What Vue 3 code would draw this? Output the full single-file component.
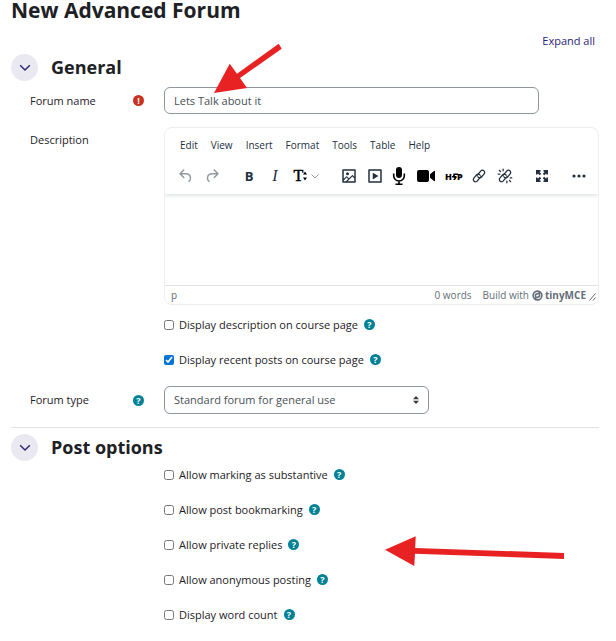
<script setup>
import { ref } from 'vue'

const forumName = ref('Lets Talk about it')
const forumType = ref('general')

const menus = ['Edit', 'View', 'Insert', 'Format', 'Tools', 'Table', 'Help']

const displayOptions = ref([
  { id: 'showdescription', label: 'Display description on course page', checked: false },
  { id: 'showrecent', label: 'Display recent posts on course page', checked: true },
])

const postOptions = ref([
  { id: 'substantive', label: 'Allow marking as substantive', checked: false },
  { id: 'bookmark', label: 'Allow post bookmarking', checked: false },
  { id: 'private', label: 'Allow private replies', checked: false },
  { id: 'anonymous', label: 'Allow anonymous posting', checked: false },
  { id: 'wordcount', label: 'Display word count', checked: false },
])
</script>

<template>
  <main class="page">
    <h1>New Advanced Forum</h1>
    <div class="expand"><a href="#">Expand all</a></div>

    <section class="general">
      <header class="section-head">
        <button class="toggle" type="button" aria-label="Collapse General">
          <svg width="12" height="8" viewBox="0 0 12 8"><path d="M1.2 1.2 6 6l4.8-4.8" /></svg>
        </button>
        <h2>General</h2>
      </header>

      <div class="row name-row">
        <div class="label">
          <label for="name">Forum name</label>
          <span class="required" title="Required">!</span>
        </div>
        <input id="name" v-model="forumName" class="text" type="text" />
      </div>

      <div class="row">
        <div class="label top"><label for="description">Description</label></div>
        <div class="editor">
          <div class="editor-head">
            <nav class="menubar">
              <button v-for="menu in menus" :key="menu" type="button">{{ menu }}</button>
            </nav>
            <div class="toolbar">
              <div class="group muted">
                <button type="button" aria-label="Undo">
                  <svg width="18" height="18" viewBox="0 0 24 24"><path d="M6.4 8H12c3.7 0 6.2 2 6.8 5.1.6 2.7-.4 5.6-2.3 6.8a1 1 0 0 1-1-1.8c1.1-.6 1.8-2.7 1.4-4.6-.5-2.1-2.1-3.5-4.9-3.5H6.4l3.3 3.3a1 1 0 1 1-1.4 1.4l-5-5a1 1 0 0 1 0-1.4l5-5a1 1 0 0 1 1.4 1.4L6.4 8Z" /></svg>
                </button>
                <button type="button" aria-label="Redo">
                  <svg width="18" height="18" viewBox="0 0 24 24"><path d="M17.6 10H12c-2.8 0-4.4 1.4-4.9 3.5-.4 2 .3 4 1.4 4.6a1 1 0 1 1-1 1.8c-2-1.2-2.9-4.1-2.3-6.8.6-3 3-5.1 6.8-5.1h5.6l-3.3-3.3a1 1 0 1 1 1.4-1.4l5 5a1 1 0 0 1 0 1.4l-5 5a1 1 0 0 1-1.4-1.4l3.3-3.3Z" /></svg>
                </button>
              </div>
              <div class="group">
                <button type="button" aria-label="Bold"><b>B</b></button>
                <button type="button" aria-label="Italic"><i>I</i></button>
                <button class="styles" type="button" aria-label="Text styles">
                  <span class="tee">T</span>
                  <svg width="4" height="10" viewBox="0 0 4 10"><path class="ink" d="M0 3.5 2 .5l2 3zM0 6.5l2 3 2-3z" /></svg>
                  <svg class="caret" width="8" height="5" viewBox="0 0 8 5"><path d="m.5.5 3.500 3.500L7.500.5" /></svg>
                </button>
              </div>
              <div class="group">
                <button type="button" aria-label="Image">
                  <svg width="18" height="18" viewBox="0 0 24 24"><path d="m5 15.7 3.300-3.200c.3-.3.7-.3 1 0L12 15l4.100-4c.3-.4.8-.4 1 0l2 1.900V5H5v10.700ZM5 18V19h3l2.800-2.900-2-2L5 17.900Zm14-3-2.500-2.400-6.400 6.500H19v-4ZM4 3h16c.6 0 1 .4 1 1v16c0 .6-.4 1-1 1H4a1 1 0 0 1-1-1V4c0-.6.4-1 1-1Zm6 8a2 2 0 1 0 0-4 2 2 0 0 0 0 4Z" fill-rule="evenodd" /></svg>
                </button>
                <button type="button" aria-label="Multimedia">
                  <svg width="18" height="18" viewBox="0 0 24 24"><path d="M4 3h16c.6 0 1 .4 1 1v16c0 .6-.4 1-1 1H4a1 1 0 0 1-1-1V4c0-.6.4-1 1-1Zm1 2v14h14V5H5Zm4 2.500 7.500 4.500L9 16.500Z" fill-rule="evenodd" /></svg>
                </button>
                <button class="audio" type="button" aria-label="Record audio">
                  <svg width="14" height="18" viewBox="0 0 14 18">
                    <rect class="ink" x="4" y="0" width="6" height="11" rx="3" />
                    <path class="ink-line" d="M1.700 6.500V9a5.300 5 0 0 0 10.600 0V6.500M7 14v3M3.500 17.200h7" />
                  </svg>
                </button>
                <button class="video" type="button" aria-label="Record video">
                  <svg width="18" height="12" viewBox="0 0 18 12">
                    <rect class="ink" width="12" height="12" rx="2" />
                    <path class="ink" d="M13 4.200 17 1q1-.5 1 .5v9q0 1-1 .5l-4-3.200z" />
                  </svg>
                </button>
                <button class="h5p" type="button" aria-label="Insert interactive content">
                  <svg width="20" height="14" viewBox="0 0 20 14">
                    <text class="letters" x="1" y="11">H</text>
                    <text class="letters" x="13" y="11">P</text>
                    <path class="ink" d="M9.500 4.500H14V6h-3l-.3 1h1.300l1 1-2 3H9l1.500-2L8 8.200V7h1z" />
                  </svg>
                </button>
                <button type="button" aria-label="Link">
                  <svg class="line" width="18" height="18" viewBox="0 0 24 24">
                    <g transform="rotate(-50 12 12)">
                      <path d="M13.500 14.500H5.500a3 3 0 0 1 0-6H11a3 3 0 0 1 2.800 4" />
                      <path d="M10.500 9.500h8a3 3 0 0 1 0 6H13a3 3 0 0 1-2.800-4" />
                    </g>
                  </svg>
                </button>
                <button type="button" aria-label="Unlink">
                  <svg class="line" width="18" height="18" viewBox="0 0 24 24">
                    <g transform="rotate(-50 12 12)">
                      <path d="M13.500 14.500H5.500a3 3 0 0 1 0-6H11a3 3 0 0 1 2.800 4" />
                      <path d="M10.500 9.500h8a3 3 0 0 1 0 6H13a3 3 0 0 1-2.800-4" />
                    </g>
                    <path d="m4.500 4.500 1.500 1.500M9.500 3v2M3 9.500h2M18 18l1.500 1.500M14.500 19v2M19 14.500h2" />
                  </svg>
                </button>
              </div>
              <div class="group">
                <button type="button" aria-label="Fullscreen">
                  <svg width="18" height="18" viewBox="0 0 24 24"><path d="M4 4h6v2L8.500 6.500 11 9 9 11 6.500 8.500 6 10H4zM20 4v6h-2l-.5-1.500L15 11l-2-2 2.500-2.500L14 6V4zM4 20v-6h2l.5 1.500L9 13l2 2-2.500 2.500L10 18v2zM20 20h-6v-2l1.500-.5L13 15l2-2 2.500 2.500L18 14h2z" /></svg>
                </button>
              </div>
              <div class="group">
                <button type="button" aria-label="More">
                  <svg width="14" height="4" viewBox="0 0 14 4"><circle cx="2" cy="2" r="1.600" /><circle cx="7" cy="2" r="1.600" /><circle cx="12" cy="2" r="1.600" /></svg>
                </button>
              </div>
            </div>
          </div>
          <textarea id="description" class="body"></textarea>
          <footer class="status">
            <span class="path">p</span>
            <span>0 words</span>
            <a href="#" class="brand">
              Build with
              <svg width="11" height="11" viewBox="0 0 11 11">
                <circle cx="5.500" cy="5.500" r="4.400" />
                <path d="M3.500 4.500 7.500 3v3.500L3.500 8z" />
              </svg>
              <strong>tinyMCE</strong>
            </a>
            <svg class="grip" width="7" height="8" viewBox="0 0 7 8"><path d="m.5 7.500 6-7M4 7.500l2.500-3" /></svg>
          </footer>
        </div>
      </div>

      <div class="checks display-checks">
        <div v-for="option in displayOptions" :key="option.id" class="check">
          <input :id="option.id" v-model="option.checked" type="checkbox" />
          <label :for="option.id">{{ option.label }}</label>
          <button class="help" type="button" aria-label="Help">?</button>
        </div>
      </div>

      <div class="row">
        <div class="label">
          <label for="type">Forum type</label>
          <button class="help" type="button" aria-label="Help">?</button>
        </div>
        <div class="select">
          <select id="type" v-model="forumType">
            <option value="general">Standard forum for general use</option>
          </select>
          <svg width="6" height="8" viewBox="0 0 6 8"><path d="M0 3.300 3 0l3 3.300zM0 4.700 3 8l3-3.300z" /></svg>
        </div>
      </div>
    </section>

    <section class="post">
      <header class="section-head">
        <button class="toggle" type="button" aria-label="Collapse Post options">
          <svg width="12" height="8" viewBox="0 0 12 8"><path d="M1.2 1.2 6 6l4.800-4.800" /></svg>
        </button>
        <h2>Post options</h2>
      </header>
      <div class="checks">
        <div v-for="option in postOptions" :key="option.id" class="check">
          <input :id="option.id" v-model="option.checked" type="checkbox" />
          <label :for="option.id">{{ option.label }}</label>
          <button class="help" type="button" aria-label="Help">?</button>
        </div>
      </div>
    </section>

    <svg class="arrow arrow-name" width="68" height="51" viewBox="214 43 68 51">
      <path d="M214 93 229.700 63.700l7.300 10 41.700-30 3 5L240 78l7 10z" />
    </svg>
    <svg class="arrow arrow-options" width="180" height="31" viewBox="385 536 180 31">
      <path d="m385 549.700 30.700-13.400-.5 11.700 148.800 5v6l-149-5.300-.7 12.300z" />
    </svg>
  </main>
</template>

<style>
body {
  margin: 0;
  background: #fff;
}
</style>

<style scoped>
.page {
  position: relative;
  padding: 0 17px 16px 11px;
  font-family: "Open Sans", "Noto Sans", sans-serif;
  font-size: 11px;
  line-height: 16px;
  color: #1d2125;
}
button,
input,
select,
textarea {
  font: inherit;
  color: inherit;
  margin: 0;
  box-sizing: border-box;
}
button {
  padding: 0;
  border: 0;
  background: none;
}
a {
  color: #2c2378;
  text-decoration: none;
}
h1 {
  margin: 0;
  font-size: 21px;
  line-height: 21px;
}
h2 {
  margin: 0;
  font-size: 18px;
  line-height: 27px;
}
.expand {
  margin-top: 12px;
  padding-right: 4px;
  text-align: right;
}
.general {
  margin-top: 5px;
  padding-bottom: 13px;
  border-bottom: 1px solid #dee2e6;
}
.post {
  padding-top: 6px;
}
.section-head {
  display: flex;
  align-items: center;
  gap: 13px;
}
.toggle {
  display: flex;
  align-items: center;
  justify-content: center;
  width: 27px;
  height: 27px;
  border-radius: 50%;
  background: #eae9f2;
}
.toggle path {
  fill: none;
  stroke: #2c2378;
  stroke-width: 1.4;
}
.row {
  display: grid;
  grid-template-columns: 153px minmax(0, 1fr);
}
.name-row {
  margin: 6px 0 13px;
}
.label {
  display: flex;
  align-items: center;
  justify-content: space-between;
  padding: 0 20px 0 19px;
}
.label.top {
  align-items: flex-start;
  padding-top: 5px;
}
.required,
.help {
  display: flex;
  align-items: center;
  justify-content: center;
  width: 11px;
  height: 11px;
  border-radius: 50%;
  background: #ca3120;
  color: #fff;
  font-size: 9px;
  font-weight: 700;
  line-height: 11px;
}
.help {
  background: #008196;
}
.text,
select {
  width: 100%;
  height: 27px;
  padding: 0 9px;
  border: 1px solid #8f959e;
  border-radius: 6px;
  background: #fff;
  color: #495057;
}
.text {
  max-width: 375px;
}
.select {
  display: grid;
  align-items: center;
  max-width: 265px;
}
.select > * {
  grid-area: 1 / 1;
}
.select svg {
  justify-self: end;
  margin-right: 10px;
  fill: #343a40;
  pointer-events: none;
}
select {
  height: 28px;
  appearance: none;
}
.editor {
  display: flex;
  flex-direction: column;
  border: 1px solid #eee;
  border-radius: 8px;
  overflow: hidden;
  color: #222f3e;
}
.editor-head {
  z-index: 1;
  box-shadow: 0 2px 3px rgba(34, 47, 62, 0.12);
}
.menubar {
  display: flex;
  gap: 13px;
  height: 34px;
  padding: 0 15px;
  font-size: 10px;
}
.toolbar {
  display: flex;
  gap: 11px;
  height: 32px;
  padding: 0 6px 0 8px;
}
.group {
  display: flex;
}
.group button {
  display: flex;
  align-items: center;
  justify-content: center;
  width: 26px;
  height: 28px;
}
.group .audio {
  width: 22px;
}
.group .video {
  width: 32px;
}
.group .h5p {
  width: 24px;
}
.group svg {
  fill: #222f3e;
}
.muted svg {
  fill: #9299a1;
}
.group b {
  font-size: 13px;
}
.group i {
  font-family: "Liberation Serif", serif;
  font-size: 16px;
}
.group .styles {
  width: 37px;
}
.tee {
  font-family: "Liberation Serif", serif;
  font-size: 16px;
  color: #000;
  -webkit-text-stroke: 0.5px #000;
}
.group .caret {
  margin-left: 4px;
  fill: none;
  stroke: #9299a1;
}
.group .ink {
  fill: #000;
}
.group .ink-line {
  fill: none;
  stroke: #000;
  stroke-width: 1.6;
}
.letters {
  font-size: 9px;
  font-weight: 800;
  fill: #000;
}
.group .line {
  fill: none;
  stroke: #222f3e;
  stroke-width: 1.7;
  stroke-linecap: round;
}
.body {
  display: block;
  width: 100%;
  height: 91px;
  padding: 12px;
  border: 0;
  outline: 0;
  resize: none;
}
.status {
  display: flex;
  align-items: center;
  gap: 11px;
  height: 18px;
  padding: 0 2px 0 6px;
  border-top: 1px solid #e3e3e3;
  color: #646d78;
  font-size: 10px;
  line-height: 18px;
}
.path {
  margin-right: auto;
}
.brand {
  display: flex;
  align-items: center;
  gap: 3px;
  color: inherit;
}
.brand strong {
  margin-left: -1px;
}
.brand circle,
.brand path {
  fill: none;
  stroke: #646d78;
  stroke-width: 1.6;
}
.grip {
  align-self: flex-end;
  margin: 0 0 3px -8px;
  fill: none;
  stroke: #646d78;
}
.checks {
  display: grid;
  grid-auto-rows: 35px;
  align-items: center;
  padding-left: 153px;
}
.display-checks {
  margin: 2px 0 9px;
}
.check {
  display: flex;
  align-items: center;
}
.check input {
  width: 10px;
  height: 10px;
  margin-right: 5px;
  accent-color: #0075d7;
}
.check .help {
  margin-left: 6px;
}
.post .checks {
  margin-top: -4px;
}
.arrow {
  position: absolute;
  fill: #e82222;
  pointer-events: none;
}
.arrow-name {
  left: 214px;
  top: 43px;
}
.arrow-options {
  left: 385px;
  top: 536px;
}
</style>
